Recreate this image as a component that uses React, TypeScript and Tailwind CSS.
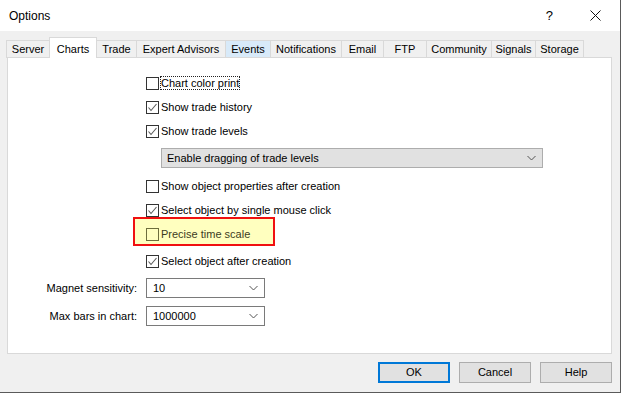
import React from 'react';

const tabs = [
  { name: 'Server', w: 'w-[44px]' },
  { name: 'Charts', w: 'w-[48px]', active: true },
  { name: 'Trade', w: 'w-[41px]' },
  { name: 'Expert Advisors', w: 'w-[90px]' },
  { name: 'Events', w: 'w-[46px]', hover: true },
  { name: 'Notifications', w: 'w-[72px]' },
  { name: 'Email', w: 'w-[43px]' },
  { name: 'FTP', w: 'w-[44px]' },
  { name: 'Community', w: 'w-[66px]' },
  { name: 'Signals', w: 'w-[45px]' },
  { name: 'Storage', w: 'w-[49px]' },
];

function Check({ className = '' }: { className?: string }) {
  return (
    <svg width="11" height="11" viewBox="0 0 11 11" className={className}>
      <polyline points="1.5,5.5 4,8.5 9.5,2" fill="none" stroke="#5a5a5a" strokeWidth="1.1" />
    </svg>
  );
}

function Chevron() {
  return (
    <svg width="9" height="6" viewBox="0 0 9 6">
      <polyline points="0.5,1 4.5,5 8.5,1" fill="none" stroke="#555" strokeWidth="1" />
    </svg>
  );
}

function Row({ label, checked, focus }: { label: string; checked?: boolean; focus?: boolean }) {
  return (
    <div className="flex items-center h-[24px]">
      <span className="w-[13px] h-[13px] border border-[#333] bg-white flex items-center justify-center">
        {checked && <Check />}
      </span>
      <span
        className={
          focus
            ? 'ml-[1px] px-[1px] leading-[14px] outline-1 outline-dotted outline-[#222] -outline-offset-1'
            : 'ml-[2px] leading-[14px]'
        }
      >
        {label}
      </span>
    </div>
  );
}

function Combo({ value }: { value: string }) {
  return (
    <div className="w-[119px] h-[20px] border border-[#7a7a7a] bg-white flex items-center justify-between pl-[6px] pr-[6px]">
      <span>{value}</span>
      <Chevron />
    </div>
  );
}

export default function App() {
  return (
    <div className="w-[621px] h-[393px] bg-[#f0f0f0] border-r border-b border-[#5a5a5a] flex flex-col text-[11px] text-black font-['Liberation_Sans',Arial,sans-serif] overflow-hidden">
      {/* title bar */}
      <div className="h-[31px] bg-white flex items-center shrink-0">
        <span className="pl-[9px] text-[12px]">Options</span>
        <span className="ml-auto mr-[37px] text-[13px]">?</span>
        <svg width="11" height="11" viewBox="0 0 11 11" className="mr-[19px]">
          <path d="M0.5 0.5 L10.5 10.5 M10.5 0.5 L0.5 10.5" stroke="#111" strokeWidth="1" />
        </svg>
      </div>

      {/* tabs */}
      <div className="flex items-end h-[21px] mt-[6px] pl-[7px] shrink-0">
        {tabs.map((t) =>
          t.active ? (
            <div
              key={t.name}
              className={`${t.w} h-[21px] -ml-px relative z-10 bg-white border border-b-0 border-[#d9d9d9] flex justify-center pt-[3px]`}
            >
              {t.name}
            </div>
          ) : (
            <div
              key={t.name}
              className={`${t.w} h-[18px] -ml-px border border-b-0 border-[#d9d9d9] flex items-center justify-center ${
                t.hover ? 'bg-[#d8eaf9]' : 'bg-[#f0f0f0]'
              }`}
            >
              {t.name}
            </div>
          )
        )}
      </div>

      {/* panel */}
      <div className="ml-[7px] mr-[8px] h-[297px] -mt-px bg-white border border-[#d9d9d9] shrink-0">
        <div className="pl-[138px] pt-[13px]">
          <Row label="Chart color print" focus />
          <Row label="Show trade history" checked />
          <Row label="Show trade levels" checked />
          <div className="ml-[15px] mt-[5px] w-[382px] h-[20px] bg-[#e1e1e1] border border-[#adadad] flex items-center justify-between pl-[5px] pr-[6px]">
            <span>Enable dragging of trade levels</span>
            <Chevron />
          </div>
          <div className="mt-[6px]">
            <Row label="Show object properties after creation" />
          </div>
          <Row label="Select object by single mouse click" checked />
          <div className="-mt-[5px] -ml-[13px] w-[142px] h-[29px] border-2 border-[#f01010] bg-[#ffffbf] pl-[11px] pt-[9px] flex items-start">
            <span className="w-[13px] h-[13px] border border-[#6e6e3c]" />
            <span className="ml-[2px] leading-[13px] text-[#3c3c1e]">Precise time scale</span>
          </div>
          <div className="mt-[3px]">
            <Row label="Select object after creation" checked />
          </div>
        </div>

        <div className="mt-[5px] grid grid-cols-[129px_auto] gap-x-[9px] gap-y-[8px] items-center justify-start">
          <span className="text-right">Magnet sensitivity:</span>
          <Combo value="10" />
          <span className="text-right">Max bars in chart:</span>
          <Combo value="1000000" />
        </div>
      </div>

      {/* buttons */}
      <div className="flex justify-end gap-[9px] mt-[8px] pr-[8px]">
        <button className="w-[72px] h-[21px] bg-[#e1e1e1] border-2 border-[#0078d7] flex items-center justify-center">
          OK
        </button>
        <button className="w-[72px] h-[21px] bg-[#e1e1e1] border border-[#adadad] flex items-center justify-center">
          Cancel
        </button>
        <button className="w-[72px] h-[21px] bg-[#e1e1e1] border border-[#adadad] flex items-center justify-center">
          Help
        </button>
      </div>
    </div>
  );
}
